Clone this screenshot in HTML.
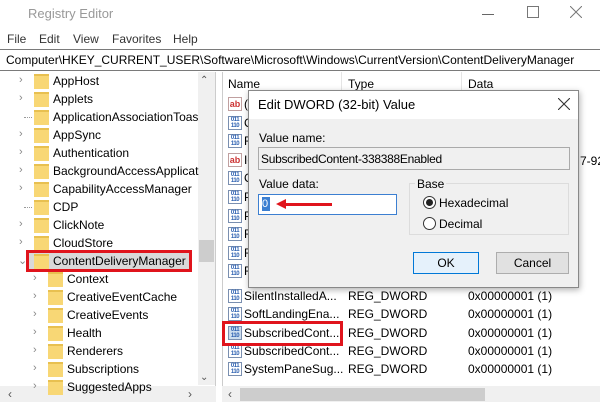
<!DOCTYPE html>
<html><head><style>
*{margin:0;padding:0;box-sizing:border-box}
body{width:600px;height:402px;overflow:hidden;background:#fff;font-family:"Liberation Sans",sans-serif;font-size:12px;color:#000;position:relative}
.a{position:absolute;white-space:nowrap}
.fold{position:absolute;width:15px;height:15px;background:#f8d775;border-top:2px solid #e8c050}
.chev{position:absolute;color:#888;font-size:11px}
.ic{position:absolute;width:14px;height:14px;border:1px solid #7a8fb0;background:#fff;font-size:6px;line-height:6px;color:#2b5fb0;font-weight:bold;text-align:center;letter-spacing:-0.5px}
.ab{position:absolute;width:14px;height:14px;border:1px solid #c0a0a0;background:#fff;font-size:9px;line-height:12px;color:#c33;font-weight:bold;text-align:center}
</style></head><body>
<div class="a" style="left:28px;top:6px;font-size:13px;color:#999">Registry Editor</div>
<div class="a" style="left:482px;top:14px;width:12px;border-top:1px solid #666"></div>
<div class="a" style="left:527px;top:6px;width:12px;height:12px;border:1px solid #777"></div>
<svg class="a" style="left:570px;top:6px" width="12" height="12"><path d="M0 0L12 12M12 0L0 12" stroke="#777" stroke-width="1"/></svg>
<div class="a" style="left:7px;top:32px;color:#333">File</div>
<div class="a" style="left:39px;top:32px;color:#333">Edit</div>
<div class="a" style="left:73px;top:32px;color:#333">View</div>
<div class="a" style="left:112px;top:32px;color:#333">Favorites</div>
<div class="a" style="left:173px;top:32px;color:#333">Help</div>
<div class="a" style="left:0;top:49px;width:600px;height:22px;border:1px solid #7a7a7a;border-left:0;border-right:0"></div>
<div class="a" style="left:6px;top:53px">Computer\HKEY_CURRENT_USER\Software\Microsoft\Windows\CurrentVersion\ContentDeliveryManager</div>
<div class="a" style="left:0;top:72px;width:216px;height:330px;border-right:1px solid #ccc"></div>
<div class="a" style="left:198px;top:72px;width:17px;height:313px;background:#f0f0f0"></div>
<div class="a" style="left:200px;top:75px;color:#555;font-size:10px">⌃</div>
<div class="a" style="left:199px;top:240px;width:15px;height:22px;background:#cdcdcd"></div>
<div class="a" style="left:200px;top:372px;color:#555;font-size:10px">⌄</div>
<div class="a" style="left:0;top:386px;width:216px;height:16px;background:#f0f0f0"></div>
<div class="a" style="left:8px;top:387px;color:#555">‹</div>
<div class="a" style="left:188px;top:387px;color:#555">›</div>
<div class="a" style="left:222px;top:72px;width:378px;height:330px;border-left:1px solid #ccc"></div>
<div class="a" style="left:222px;top:386px;width:378px;height:16px;background:#f0f0f0"></div>
<div class="a" style="left:240px;top:388px;width:245px;height:13px;background:#cdcdcd"></div>
<div class="a" style="left:228px;top:387px;color:#555">‹</div>

<div class="a" style="left:28px;top:252px;width:162px;height:18px;background:#d9d9d9"></div>
<div id="tree"></div>
<script>
var L=[["AppHost",0,1],["Applets",0,1],["ApplicationAssociationToas",0,0],["AppSync",0,1],["Authentication",0,1],["BackgroundAccessApplicat",0,1],["CapabilityAccessManager",0,1],["CDP",0,0],["ClickNote",0,1],["CloudStore",0,1],["ContentDeliveryManager",0,2],["Context",1,1],["CreativeEventCache",1,1],["CreativeEvents",1,1],["Health",1,1],["Renderers",1,1],["Subscriptions",1,1],["SuggestedApps",1,1]];
var h="";
L.forEach(function(r,i){var y=73+i*18,x=r[1]?48:34;
h+='<div class="fold" style="left:'+x+'px;top:'+(y+1)+'px"></div>';
if(r[2]==1)h+='<div class="chev" style="left:'+(x-15)+'px;top:'+(y+1)+'px">›</div>';
if(r[2]==2)h+='<div class="chev" style="left:'+(x-16)+'px;top:'+(y+1)+'px">⌄</div>';
if(r[2]==0)h+='<div class="a" style="left:'+(x-10)+'px;top:'+(y+8)+'px;width:8px;border-top:1px dotted #999"></div>';
h+='<div class="a" style="left:'+(x+19)+'px;top:'+(y+1)+'px">'+r[0]+'</div>';});
var R=["(","C","F","Ic","C","P","P","R","R","R"],N=["SilentInstalledA...","SoftLandingEna...","SubscribedCont...","SubscribedCont...","SystemPaneSug..."],C=[296,314,333,351,369];
for(var i=0;i<15;i++){var c=i<10?104+i*18.6:C[i-10];var y=c-8;
var ab=(i==0||i==3);
h+='<div class="'+(ab?'ab':'ic')+'" style="left:228px;top:'+(y+1)+'px'+(i==12?';background:#cde;':'')+'">'+(ab?'ab':'011<br>110')+'</div>';
if(i<10)h+='<div class="a" style="left:244px;top:'+(y+1)+'px">'+R[i]+'</div>';
else{h+='<div class="a" style="left:244px;top:'+(y+1)+'px">'+N[i-10]+'</div><div class="a" style="left:348px;top:'+(y+1)+'px">REG_DWORD</div><div class="a" style="left:468px;top:'+(y+1)+'px">0x00000001 (1)</div>';}}
document.getElementById('tree').innerHTML=h;
</script>
<div class="a" style="left:228px;top:77px">Name</div>
<div class="a" style="left:341px;top:72px;height:20px;border-left:1px solid #e5e5e5"></div>
<div class="a" style="left:348px;top:77px">Type</div>
<div class="a" style="left:461px;top:72px;height:20px;border-left:1px solid #e5e5e5"></div>
<div class="a" style="left:468px;top:77px">Data</div>
<div class="a" style="left:580px;top:154px">7-92</div>
<div class="a" style="left:26px;top:250px;width:166px;height:22px;border:3px solid #e0141c"></div>
<div class="a" style="left:222px;top:321px;width:121px;height:25px;border:3px solid #e0141c"></div>
<div class="a" style="left:248px;top:90px;width:331px;height:198px;background:#f0f0f0;border:1px solid #888;box-shadow:1px 2px 6px rgba(0,0,0,.3)"></div>
<div class="a" style="left:249px;top:91px;width:329px;height:28px;background:#fff"></div>
<div class="a" style="left:258px;top:97px;font-size:13px">Edit DWORD (32-bit) Value</div>
<svg class="a" style="left:558px;top:98px" width="12" height="12"><path d="M0 0L12 12M12 0L0 12" stroke="#333" stroke-width="1.1"/></svg>
<div class="a" style="left:259px;top:131px">Value name:</div>
<div class="a" style="left:258px;top:147px;width:312px;height:23px;background:#f0f0f0;border:1px solid #aaa"></div>
<div class="a" style="left:261px;top:152px;letter-spacing:-0.3px">SubscribedContent-338388Enabled</div>
<div class="a" style="left:259px;top:177px">Value data:</div>
<div class="a" style="left:258px;top:194px;width:139px;height:21px;background:#fff;border:1px solid #3c7fd1"></div>
<div class="a" style="left:262px;top:197px;width:8px;height:14px;background:#3c7fd1;color:#fff;font-size:11px;line-height:14px">0</div>
<div class="a" style="left:282px;top:203px;width:50px;height:3px;background:#e0141c"></div>
<div class="a" style="left:276px;top:199px;width:0;height:0;border-top:5px solid transparent;border-bottom:5px solid transparent;border-right:10px solid #e0141c"></div>
<div class="a" style="left:409px;top:183px;width:160px;height:52px;border:1px solid #dcdcdc"></div>
<div class="a" style="left:415px;top:177px;background:#f0f0f0;padding:0 2px">Base</div>
<div class="a" style="left:423px;top:196px;width:13px;height:13px;border:1px solid #333;border-radius:50%;background:#fff"></div>
<div class="a" style="left:426px;top:199px;width:7px;height:7px;border-radius:50%;background:#222"></div>
<div class="a" style="left:439px;top:196px">Hexadecimal</div>
<div class="a" style="left:423px;top:217px;width:13px;height:13px;border:1px solid #333;border-radius:50%;background:#fff"></div>
<div class="a" style="left:439px;top:217px">Decimal</div>
<div class="a" style="left:413px;top:252px;width:66px;height:22px;background:#e5f1fb;border:1px solid #0078d7;text-align:center;line-height:20px">OK</div>
<div class="a" style="left:496px;top:252px;width:73px;height:22px;background:#e1e1e1;border:1px solid #adadad;text-align:center;line-height:20px">Cancel</div>
</body></html>
